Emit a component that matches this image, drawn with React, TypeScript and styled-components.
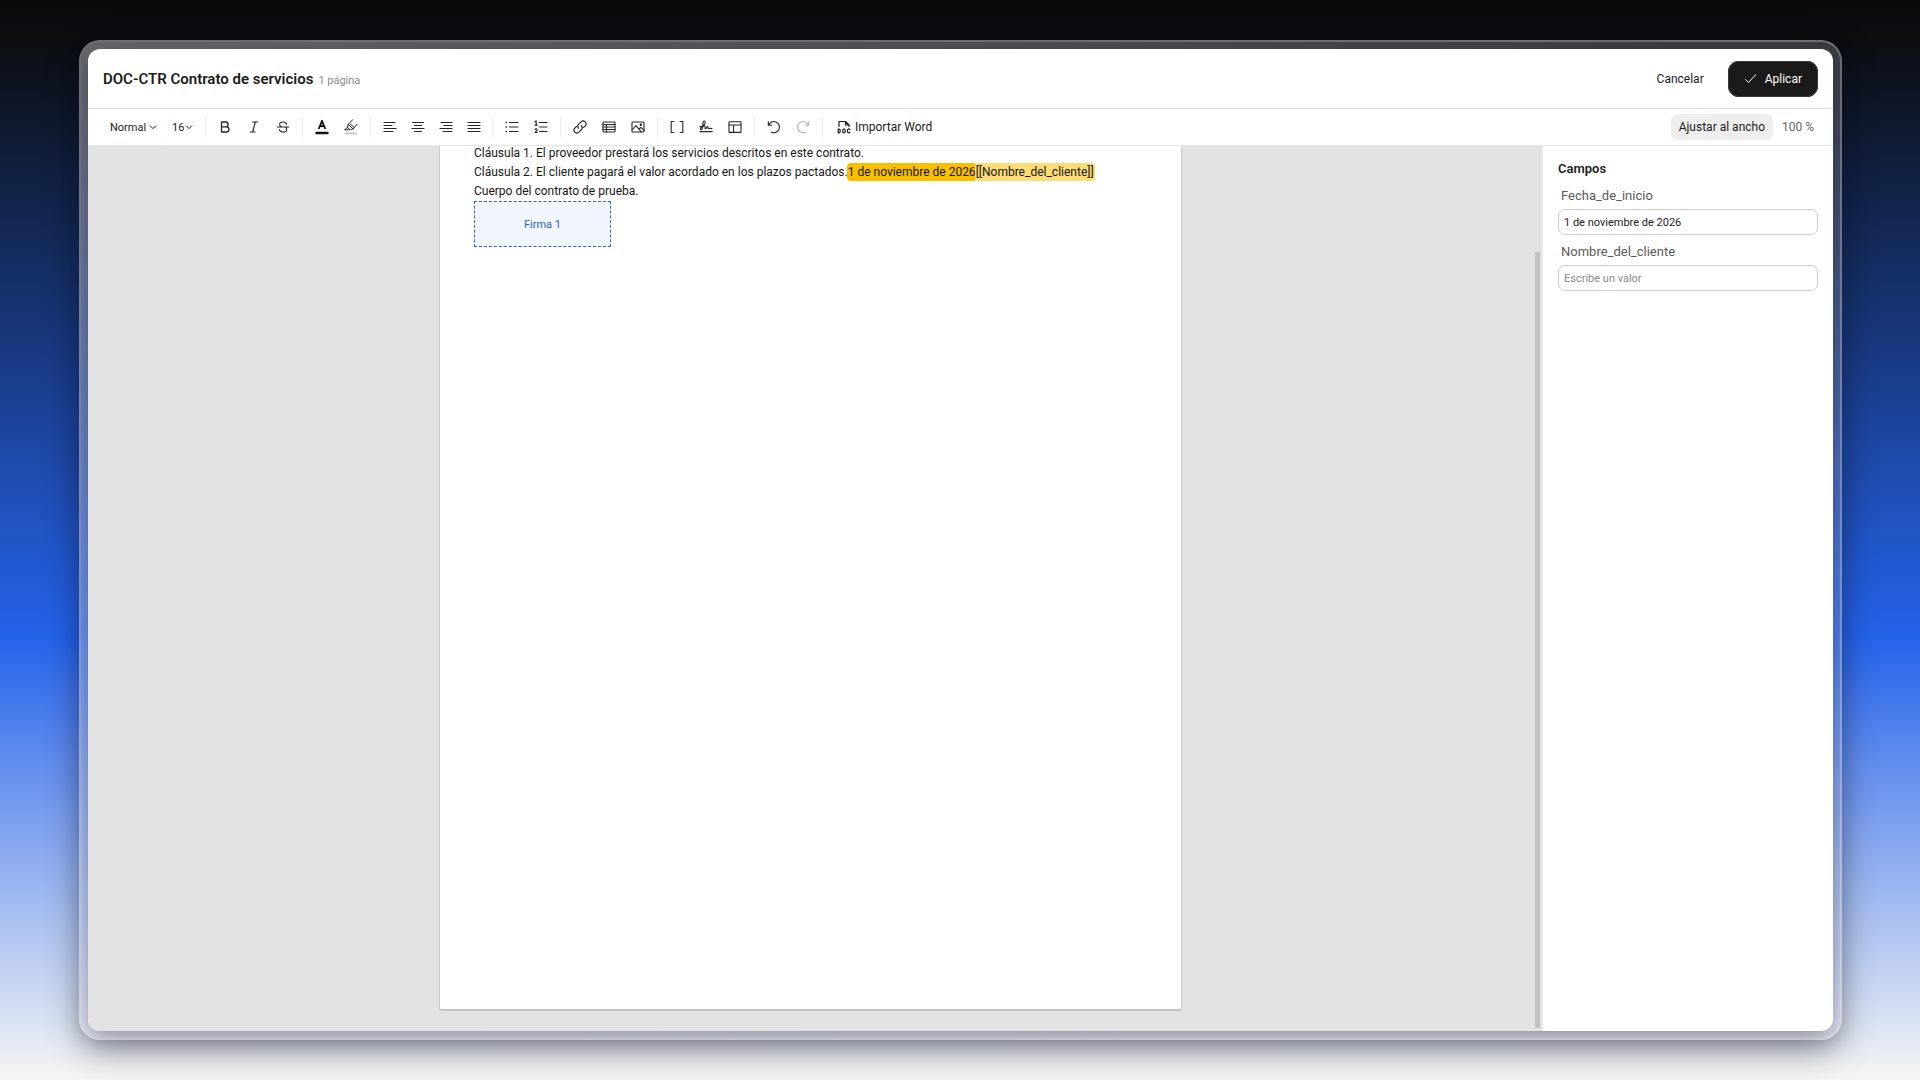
import React, { useState } from "react";
import styled, { createGlobalStyle, css } from "styled-components";

const Global = createGlobalStyle`
  *, *::before, *::after { box-sizing: border-box; }
  body {
    margin: 0;
    font-family: Roboto, "Liberation Sans", sans-serif;
    font-size: 12px;
    color: #1c1b1a;
  }
  button, select, input { font: inherit; color: inherit; margin: 0; }
`;

const Backdrop = styled.div`
  min-height: 100vh;
  display: flex;
  padding: 40px 78px 40px 79px;
  background: linear-gradient(180deg, #0a0a0a 0%, #0c0f15 5%, #2563eb 59%, #f5f5f4 100%);
`;

const Frame = styled.div`
  flex: 1;
  min-width: 0;
  display: flex;
  padding: 7px;
  border: 2px solid rgba(255, 255, 255, 0.42);
  border-radius: 21px;
  background: linear-gradient(120deg, rgba(255, 255, 255, 0.38), rgba(255, 255, 255, 0.2) 70%);
  background-clip: padding-box;
  box-shadow: 0 10px 36px rgba(0, 0, 0, 0.32);
`;

const Window = styled.main`
  flex: 1;
  min-width: 0;
  display: flex;
  flex-direction: column;
  overflow: hidden;
  border-radius: 12px;
  background: #fff;
  box-shadow: 0 8px 24px rgba(30, 25, 50, 0.45);
`;

const Header = styled.header`
  height: 60px;
  flex: none;
  display: flex;
  align-items: center;
  justify-content: space-between;
  padding: 0 15px;
  border-bottom: 1px solid #dcdee0;
`;

const TitleGroup = styled.div`
  display: flex;
  align-items: baseline;
  gap: 5px;
`;

const Title = styled.h1`
  margin: 0;
  font-size: 15px;
  font-weight: 600;
  line-height: 20px;
`;

const PageCount = styled.span`
  font-size: 11px;
  color: #8c8c8c;
`;

const Actions = styled.div`
  display: flex;
  align-items: center;
  gap: 8px;
`;

const ActionButton = styled.button<{ $primary?: boolean }>`
  display: flex;
  align-items: center;
  gap: 8px;
  height: 36px;
  padding: 0 16px;
  border: 0;
  border-radius: 11px;
  background: transparent;
  font-size: 12px;
  cursor: pointer;
  ${(p) =>
    p.$primary &&
    css`
      background: #1c1a19;
      color: #fff;
      box-shadow: inset 0 0 0 1px #3b3938;
    `}
`;

const Toolbar = styled.div`
  height: 37px;
  flex: none;
  display: flex;
  align-items: center;
  gap: 3px;
  padding: 0 15px 0 16px;
  border-bottom: 1px solid #e6e6e6;
`;

const Separator = styled.span`
  width: 1px;
  height: 20px;
  margin: 0 3px;
  background: #ececec;
`;

const ToolButton = styled.button<{ $narrow?: boolean; $muted?: boolean }>`
  width: ${(p) => (p.$narrow ? 25 : 26)}px;
  height: 26px;
  display: grid;
  place-items: center;
  padding: 0;
  border: 0;
  border-radius: 6px;
  background: transparent;
  color: ${(p) => (p.$muted ? "#b4b4b4" : "#262626")};
  cursor: pointer;
`;

const Picker = styled.label<{ $width: number }>`
  display: grid;
  align-items: center;
  width: ${(p) => p.$width}px;
  padding: 0 6px;
  font-size: 11px;

  select, svg { grid-area: 1 / 1; }
  select {
    appearance: none;
    width: 100%;
    height: 26px;
    padding: 0;
    border: 0;
    background: transparent;
  }
  svg { justify-self: end; pointer-events: none; }
`;

const ImportButton = styled.button`
  display: flex;
  align-items: center;
  gap: 4px;
  height: 26px;
  padding: 0 8px;
  border: 0;
  background: transparent;
  cursor: pointer;
`;

const ZoomGroup = styled.div`
  margin-left: auto;
  display: flex;
  align-items: center;
  gap: 9px;
  padding-right: 4px;
  color: #666;
`;

const FitButton = styled.button`
  height: 26px;
  padding: 0 8px;
  border: 0;
  border-radius: 7px;
  background: #eeeeee;
  color: #1c1b1a;
  cursor: pointer;
`;

const Body = styled.div`
  flex: 1;
  min-height: 0;
  display: flex;
`;

const Canvas = styled.section`
  flex: 1;
  min-width: 0;
  display: flex;
  justify-content: center;
  overflow: hidden;
  background: #e2e2e2;
`;

const Paper = styled.article`
  width: 741px;
  margin: -2px 0 22px;
  padding: 0 34px;
  background: #fff;
  box-shadow: 0 1px 2px rgba(0, 0, 0, 0.28);
  font-size: 12px;
  line-height: 19px;
  color: #161616;

  p { margin: 0; }
`;

const Field = styled.span<{ $empty?: boolean }>`
  margin: 0 -1px;
  padding: 2px 1px;
  border-radius: 4px;
  background: ${(p) => (p.$empty ? "#fbdc75" : "#fac000")};
`;

const SignatureBox = styled.div`
  width: 137px;
  height: 46px;
  display: grid;
  place-items: center;
  border: 1px dashed #2f62c9;
  background: #f0f5fe;
  color: #2f62c9;
  font-size: 11px;
`;

const ScrollTrack = styled.div`
  width: 9px;
  flex: none;
  display: flex;
  flex-direction: column;
  justify-content: flex-end;
  align-items: center;
  padding-bottom: 3px;
  background: #e2e2e2;
`;

const ScrollThumb = styled.div`
  width: 5px;
  height: 88%;
  background: #c2c2c2;
`;

const Sidebar = styled.aside`
  width: 291px;
  flex: none;
  padding: 14px 15px;
  border-left: 1px solid #ebebeb;
`;

const SidebarTitle = styled.h2`
  margin: 0 0 10px;
  font-size: 13px;
  font-weight: 600;
  line-height: 18px;
`;

const FieldRow = styled.div`
  display: flex;
  flex-direction: column;
  gap: 5px;
  margin-bottom: 9px;

  label {
    padding-left: 3px;
    font-size: 13px;
    line-height: 16px;
    color: #5a5a5a;
  }
  input {
    width: 100%;
    height: 26px;
    padding: 0 5px;
    border: 1px solid #cdcdcd;
    border-radius: 7px;
    background: #fff;
    font-size: 11px;
  }
  input::placeholder { color: #8a8a8a; opacity: 1; }
`;

type IconProps = { children: React.ReactNode; size?: number; stroke?: number };
const Icon = ({ children, size = 16, stroke = 1.1 }: IconProps) => (
  <svg
    width={size}
    height={size}
    viewBox={`0 0 ${size} ${size}`}
    fill="none"
    stroke="currentColor"
    strokeWidth={stroke}
    strokeLinecap="round"
    strokeLinejoin="round"
    aria-hidden="true"
  >
    {children}
  </svg>
);

const Chevron = () => (
  <Icon size={8} stroke={1}>
    <path d="M1.2 2.8 4 5.6l2.8-2.8" />
  </Icon>
);

type Tool = { label: string; icon: React.ReactNode; narrow?: boolean; muted?: boolean };

const alignTool = (label: string, d: string): Tool => ({
  label,
  narrow: true,
  icon: (
    <Icon stroke={1.2}>
      <path d={d} />
    </Icon>
  ),
});

const groups: Tool[][] = [
  [
    {
      label: "Negrita",
      icon: (
        <Icon stroke={1.3}>
          <path d="M4.5 3h4.2a2.4 2.4 0 0 1 0 4.8H4.5zM4.5 7.8h4.8a2.6 2.6 0 0 1 0 5.2H4.5z" />
        </Icon>
      ),
    },
    {
      label: "Cursiva",
      icon: (
        <Icon>
          <path d="M6.6 3h5M4.2 13h5M9.4 3 6.6 13" />
        </Icon>
      ),
    },
    {
      label: "Tachado",
      icon: (
        <Icon>
          <path d="M2.2 8h11.6M11.6 5.3C11.2 3.8 9.8 3 8 3 6 3 4.6 4 4.6 5.5c0 1.3.9 2 2.4 2.5M4.4 10.6C4.8 12.2 6.2 13 8.1 13c2.2 0 3.6-1 3.6-2.6 0-1.1-.5-1.9-1.5-2.4" />
        </Icon>
      ),
    },
  ],
  [
    {
      label: "Color de texto",
      icon: (
        <Icon>
          <path d="m4.7 10 3.3-8.2L11.3 10M5.8 7.2h4.4" stroke="#111" strokeWidth="1.8" strokeLinecap="butt" />
          <path d="M2.5 14h11" stroke="#111" strokeWidth="2.4" />
        </Icon>
      ),
    },
    {
      label: "Resaltar",
      icon: (
        <Icon stroke={1}>
          <path d="M9.5.8 5.2 5.5l-.7 3 2.8 2.2 2.9-.8L14 5.2M5.2 5.5l5 4.4M4.5 8.5l-3 2.3h4.3M7.5 5.2l3 2.6" />
          <path d="M2.5 14.6h11" stroke="#c8c8c8" strokeWidth="2" />
        </Icon>
      ),
    },
  ],
  [
    alignTool("Alinear a la izquierda", "M2 3.5h11M2 6.5h8M2 9.5h12M2 12.5h9"),
    alignTool("Centrar", "M2.5 3.5h11M4.5 6.5h7M2 9.5h12M4.5 12.5h7"),
    alignTool("Alinear a la derecha", "M3 3.5h11M6 6.5h8M2 9.5h12M5 12.5h9"),
    alignTool("Justificar", "M2 3.5h12M2 6.5h12M2 9.5h12M2 12.5h12"),
  ],
  [
    {
      label: "Lista con viñetas",
      icon: (
        <Icon>
          <path d="M5.5 3.5H14M5.5 8H14M5.5 12.5H14" />
          <path d="M2.3 3.5h.01M2.3 8h.01M2.3 12.5h.01" strokeWidth="1.7" />
        </Icon>
      ),
    },
    {
      label: "Lista numerada",
      icon: (
        <Icon>
          <path d="M6.5 3.5H14M6.5 8H14M6.5 12.5H14" />
          <path d="m2 2.8 1.2-.9v4.2M2 6.1h2.3M2 10.5c.3-1 2.2-1 2.2.2 0 .9-1.2 1.7-2.2 2.8h2.4" />
        </Icon>
      ),
    },
  ],
  [
    {
      label: "Enlace",
      icon: (
        <Icon>
          <path d="M6.7 9.3a2.9 2.9 0 0 1 0-4.1l2.4-2.4a2.9 2.9 0 0 1 4.1 4.1L11.6 8.5M9.3 6.7a2.9 2.9 0 0 1 0 4.1l-2.4 2.4a2.9 2.9 0 0 1-4.1-4.1L4.4 7.5" />
        </Icon>
      ),
    },
    {
      label: "Tabla",
      icon: (
        <Icon>
          <rect x="2" y="3" width="12" height="10" rx="0.8" />
          <path d="M2 5.5h12M2 8h12M2 10.5h12M5.5 5.5V13" />
        </Icon>
      ),
    },
    {
      label: "Imagen",
      icon: (
        <Icon>
          <rect x="2" y="3" width="12" height="10" rx="0.8" />
          <path d="m2 11 4-4.3 5.3 6.1M9 9.8l1.7-1.5L14 11.2" />
          <circle cx="10.8" cy="5.8" r="0.7" />
        </Icon>
      ),
    },
  ],
  [
    {
      label: "Insertar campo",
      icon: (
        <Icon>
          <path d="M4.8 2.5H2.2v11h2.6M11.2 2.5h2.6v11h-2.6" strokeLinejoin="miter" />
        </Icon>
      ),
    },
    {
      label: "Insertar firma",
      icon: (
        <Icon>
          <path d="M2 12.6h12.2" />
          <path d="M1.8 7.6C4.8 7.9 7.6 5.2 7.2 2.9 6.9 1.5 5.3 1.7 5 3.6c-.3 2.3.2 4-.8 6.2-.7 1.5-2.2 1-1.7-.2C3.2 8 5.8 6.8 6.900 7.100c.9.3-.5 2.600.5 2.800 1 .1 1.400-2.500 2.300-2.300.7.200-.3 2.100.6 2.200.8.100 1.200-.7 2-.6.600.1.800.4 1.600.4" />
        </Icon>
      ),
    },
    {
      label: "Insertar plantilla",
      icon: (
        <Icon>
          <rect x="2" y="2.8" width="12" height="10.6" rx="0.5" />
          <path d="M2 6h12M6.5 6v7.4" />
        </Icon>
      ),
    },
  ],
  [
    {
      label: "Deshacer",
      icon: (
        <Icon>
          <path d="M2.3 2.8v3.5h3.5M2.6 6.2A5.6 5.6 0 1 1 5.5 13.2" />
        </Icon>
      ),
    },
    {
      label: "Rehacer",
      muted: true,
      icon: (
        <Icon>
          <path d="M13.7 2.8v3.5h-3.5M13.4 6.2A5.6 5.6 0 1 0 10.5 13.2" />
        </Icon>
      ),
    },
  ],
];

const WordIcon = () => (
  <Icon size={14} stroke={1.2}>
    <path d="M2 6.5V1.5h6.5L12 5v1.5M8.5 1.5V5H12" />
    <path d="M1.2 9v3.8h.8c1.6 0 1.6-3.8 0-3.8zM7 8.9c-1.7 0-1.7 4 0 4s1.7-4 0-4M12.9 9.6c-.9-1.1-2.5-.8-2.5 1.3s1.6 2.4 2.5 1.3" />
  </Icon>
);

const CheckIcon = () => (
  <Icon size={13} stroke={1}>
    <path d="m1.5 7.5 3 3L11.8 2.6" />
  </Icon>
);

export default function App() {
  const [date, setDate] = useState("1 de noviembre de 2026");
  const [client, setClient] = useState("");

  return (
    <>
      <Global />
      <Backdrop>
        <Frame>
          <Window>
            <Header>
              <TitleGroup>
                <Title>DOC-CTR Contrato de servicios</Title>
                <PageCount>1 página</PageCount>
              </TitleGroup>
              <Actions>
                <ActionButton type="button">Cancelar</ActionButton>
                <ActionButton type="button" $primary>
                  <CheckIcon />
                  Aplicar
                </ActionButton>
              </Actions>
            </Header>

            <Toolbar role="toolbar">
              <Picker $width={59}>
                <select aria-label="Estilo" defaultValue="Normal">
                  <option>Normal</option>
                </select>
                <Chevron />
              </Picker>
              <Picker $width={33}>
                <select aria-label="Tamaño" defaultValue="16">
                  <option>16</option>
                </select>
                <Chevron />
              </Picker>
              {groups.map((tools, i) => (
                <React.Fragment key={i}>
                  <Separator />
                  {tools.map((t) => (
                    <ToolButton
                      key={t.label}
                      type="button"
                      aria-label={t.label}
                      $narrow={t.narrow}
                      $muted={t.muted}
                    >
                      {t.icon}
                    </ToolButton>
                  ))}
                </React.Fragment>
              ))}
              <Separator />
              <ImportButton type="button">
                <WordIcon />
                Importar Word
              </ImportButton>
              <ZoomGroup>
                <FitButton type="button">Ajustar al ancho</FitButton>
                <span>100 %</span>
              </ZoomGroup>
            </Toolbar>

            <Body>
              <Canvas>
                <Paper>
                  <p>Cláusula 1. El proveedor prestará los servicios descritos en este contrato.</p>
                  <p>
                    Cláusula 2. El cliente pagará el valor acordado en los plazos pactados.
                    <Field>{date}</Field>
                    <Field $empty={!client}>{client || "[[Nombre_del_cliente]]"}</Field>
                  </p>
                  <p>Cuerpo del contrato de prueba.</p>
                  <SignatureBox>Firma 1</SignatureBox>
                </Paper>
              </Canvas>
              <ScrollTrack>
                <ScrollThumb />
              </ScrollTrack>
              <Sidebar>
                <SidebarTitle>Campos</SidebarTitle>
                <FieldRow>
                  <label htmlFor="fecha">Fecha_de_inicio</label>
                  <input id="fecha" value={date} onChange={(e) => setDate(e.target.value)} />
                </FieldRow>
                <FieldRow>
                  <label htmlFor="cliente">Nombre_del_cliente</label>
                  <input
                    id="cliente"
                    placeholder="Escribe un valor"
                    value={client}
                    onChange={(e) => setClient(e.target.value)}
                  />
                </FieldRow>
              </Sidebar>
            </Body>
          </Window>
        </Frame>
      </Backdrop>
    </>
  );
}
